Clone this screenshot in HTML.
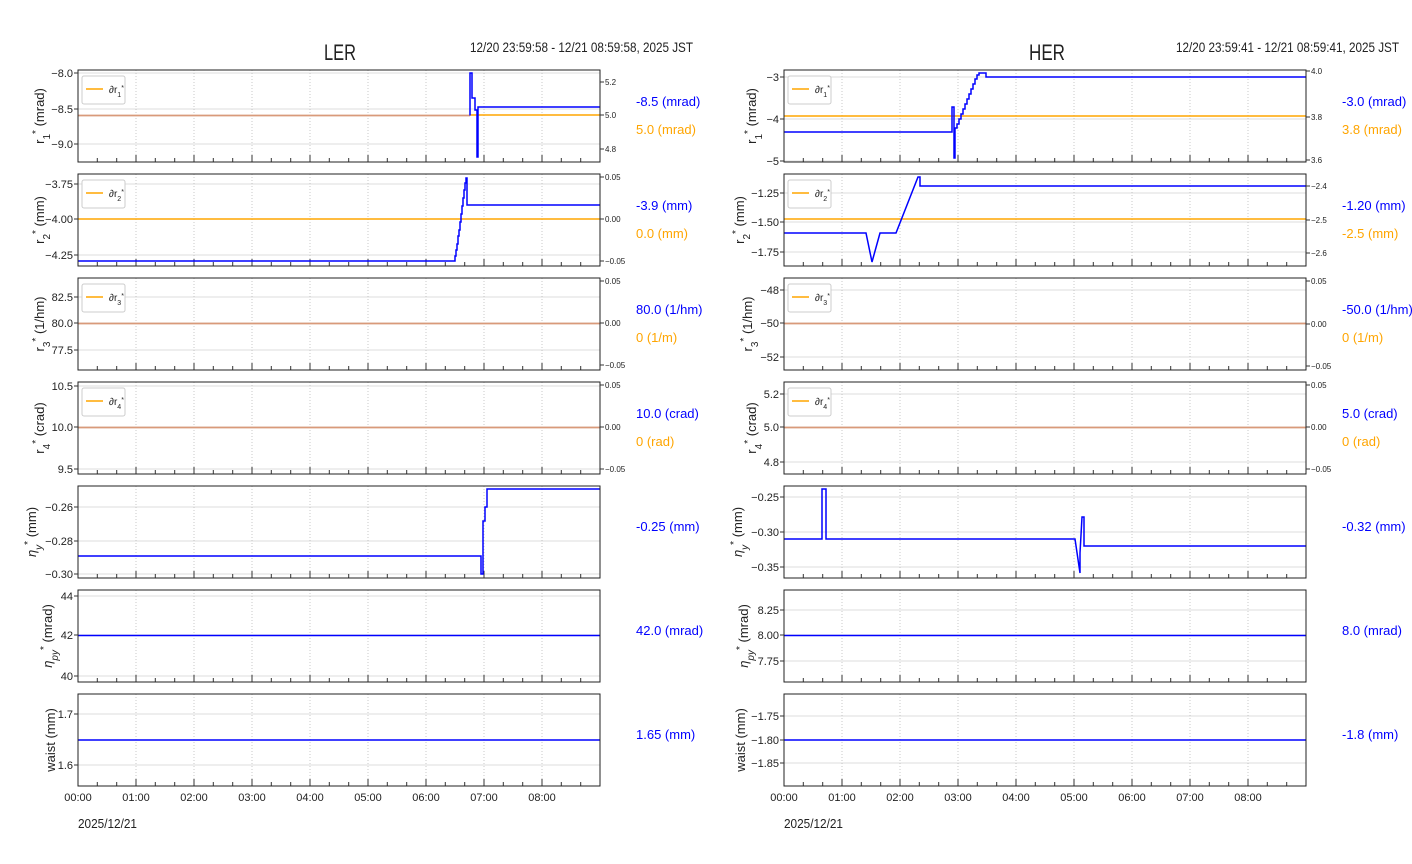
<!DOCTYPE html>
<html><head><meta charset="utf-8"><style>
html,body{margin:0;padding:0;background:#fff;width:1412px;height:864px;overflow:hidden}
svg{display:block}
text{font-family:"Liberation Sans Narrow","Liberation Sans",sans-serif;fill:#222}
.tl{font-size:11px;text-anchor:end}
.tr{font-size:8px}
.yl{font-size:13px;text-anchor:middle}
.vb{font-size:13px;fill:#0000ff}
.vo{font-size:13px;fill:#ffa500}
.xt{font-size:11px;text-anchor:middle}
.bl{fill:none;stroke:#0000ff;stroke-width:1.5}
.or{fill:none;stroke:#ffa500;stroke-width:1.5}
.mx{fill:none;stroke:#d99a7a;stroke-width:1.8}
.hg{stroke:#ddd;stroke-width:1}
</style></head><body>
<svg width="1412" height="864" viewBox="0 0 1412 864" xmlns="http://www.w3.org/2000/svg">
<defs>
<g id="grid">
<path d="M58 0V92M116 0V92M174 0V92M232 0V92M290 0V92M348 0V92M406 0V92M464 0V92" stroke="#bbb" stroke-width="0.8" stroke-dasharray="1,2"/>
<path d="M19.3 92v-4M38.7 92v-4M77.3 92v-4M96.7 92v-4M135.3 92v-4M154.7 92v-4M193.3 92v-4M212.7 92v-4M251.3 92v-4M270.7 92v-4M309.3 92v-4M328.7 92v-4M367.3 92v-4M386.7 92v-4M425.3 92v-4M444.7 92v-4M483.3 92v-4M502.7 92v-4M58 92v-7M116 92v-7M174 92v-7M232 92v-7M290 92v-7M348 92v-7M406 92v-7M464 92v-7" stroke="#333" stroke-width="1"/>
</g>
<rect id="frame" x="0" y="0" width="522" height="92" fill="none" stroke="#222" stroke-width="1"/>
<g id="leg"><rect x="4" y="6" width="43" height="28" rx="2" fill="#fff" stroke="#ccc"/><path d="M8 19H25" stroke="#ffa500" stroke-width="1.5"/></g>
</defs>

<text x="340" y="60" style="font-size:22px;text-anchor:middle" textLength="32" lengthAdjust="spacingAndGlyphs">LER</text>
<text x="470" y="52" style="font-size:14px" textLength="223" lengthAdjust="spacingAndGlyphs">12/20 23:59:58 - 12/21 08:59:58, 2025 JST</text>
<text x="1047" y="60" style="font-size:22px;text-anchor:middle" textLength="36" lengthAdjust="spacingAndGlyphs">HER</text>
<text x="1176" y="52" style="font-size:14px" textLength="223" lengthAdjust="spacingAndGlyphs">12/20 23:59:41 - 12/21 08:59:41, 2025 JST</text>

<!-- ===== LEFT ===== -->
<g transform="translate(78,70)">
<path class="hg" d="M0 3H522M0 39H522M0 74H522"/><use href="#grid"/>
<path class="mx" d="M0 45.5H392"/>
<path class="or" d="M392 45H522"/>
<path class="bl" d="M392 45.5V3H394V28H397V40H399V87H400V37H522"/>
<use href="#leg"/><text x="31" y="23" style="font-size:10px">∂r<tspan baseline-shift="sub" font-size="7">1</tspan><tspan baseline-shift="super" font-size="7">*</tspan></text>
<use href="#frame"/>
<path d="M0 3h-4M0 39h-4M0 74h-4M522 12h4M522 45h4M522 79h4" stroke="#333"/>
<text class="tl" x="-5" y="7">−8.0</text><text class="tl" x="-5" y="43">−8.5</text><text class="tl" x="-5" y="78">−9.0</text>
<text class="tr" x="527" y="15">5.2</text><text class="tr" x="527" y="48">5.0</text><text class="tr" x="527" y="82">4.8</text>
</g>
<text class="yl" transform="translate(44,116) rotate(-90)">r<tspan baseline-shift="sub" font-size="10">1</tspan><tspan baseline-shift="super" font-size="10">*</tspan> (mrad)</text>
<text class="vb" x="636" y="106">-8.5 (mrad)</text><text class="vo" x="636" y="134">5.0 (mrad)</text>

<g transform="translate(78,174)">
<path class="hg" d="M0 10H522M0 45H522M0 81H522"/><use href="#grid"/>
<path class="or" d="M0 45H522"/>
<path class="bl" d="M0 87H377V82H378V76H379V70H380V62H381V56H382V48H383V40H384V32H385V24H386V16H387V9H388V4H389V31H522"/>
<use href="#leg"/><text x="31" y="23" style="font-size:10px">∂r<tspan baseline-shift="sub" font-size="7">2</tspan><tspan baseline-shift="super" font-size="7">*</tspan></text>
<use href="#frame"/>
<path d="M0 10h-4M0 45h-4M0 81h-4M522 3h4M522 45h4M522 87h4" stroke="#333"/>
<text class="tl" x="-5" y="14">−3.75</text><text class="tl" x="-5" y="49">−4.00</text><text class="tl" x="-5" y="85">−4.25</text>
<text class="tr" x="527" y="6">0.05</text><text class="tr" x="527" y="48">0.00</text><text class="tr" x="527" y="90">−0.05</text>
</g>
<text class="yl" transform="translate(44,220) rotate(-90)">r<tspan baseline-shift="sub" font-size="10">2</tspan><tspan baseline-shift="super" font-size="10">*</tspan> (mm)</text>
<text class="vb" x="636" y="210">-3.9 (mm)</text><text class="vo" x="636" y="238">0.0 (mm)</text>

<g transform="translate(78,278)">
<path class="hg" d="M0 19H522M0 45H522M0 72H522"/><use href="#grid"/>
<path class="mx" d="M0 45.5H522"/>
<use href="#leg"/><text x="31" y="23" style="font-size:10px">∂r<tspan baseline-shift="sub" font-size="7">3</tspan><tspan baseline-shift="super" font-size="7">*</tspan></text>
<use href="#frame"/>
<path d="M0 19h-4M0 45h-4M0 72h-4M522 3h4M522 45h4M522 87h4" stroke="#333"/>
<text class="tl" x="-5" y="23">82.5</text><text class="tl" x="-5" y="49">80.0</text><text class="tl" x="-5" y="76">77.5</text>
<text class="tr" x="527" y="6">0.05</text><text class="tr" x="527" y="48">0.00</text><text class="tr" x="527" y="90">−0.05</text>
</g>
<text class="yl" transform="translate(44,324) rotate(-90)">r<tspan baseline-shift="sub" font-size="10">3</tspan><tspan baseline-shift="super" font-size="10">*</tspan> (1/hm)</text>
<text class="vb" x="636" y="314">80.0 (1/hm)</text><text class="vo" x="636" y="342">0 (1/m)</text>

<g transform="translate(78,382)">
<path class="hg" d="M0 4H522M0 45H522M0 87H522"/><use href="#grid"/>
<path class="mx" d="M0 45.5H522"/>
<use href="#leg"/><text x="31" y="23" style="font-size:10px">∂r<tspan baseline-shift="sub" font-size="7">4</tspan><tspan baseline-shift="super" font-size="7">*</tspan></text>
<use href="#frame"/>
<path d="M0 4h-4M0 45h-4M0 87h-4M522 3h4M522 45h4M522 87h4" stroke="#333"/>
<text class="tl" x="-5" y="8">10.5</text><text class="tl" x="-5" y="49">10.0</text><text class="tl" x="-5" y="91">9.5</text>
<text class="tr" x="527" y="6">0.05</text><text class="tr" x="527" y="48">0.00</text><text class="tr" x="527" y="90">−0.05</text>
</g>
<text class="yl" transform="translate(44,428) rotate(-90)">r<tspan baseline-shift="sub" font-size="10">4</tspan><tspan baseline-shift="super" font-size="10">*</tspan> (crad)</text>
<text class="vb" x="636" y="418">10.0 (crad)</text><text class="vo" x="636" y="446">0 (rad)</text>

<g transform="translate(78,486)">
<path class="hg" d="M0 21H522M0 55H522M0 88H522"/><use href="#grid"/>
<path class="bl" d="M0 70H403V88H405V35H407V21H409V3H522"/>
<use href="#frame"/>
<path d="M0 21h-4M0 55h-4M0 88h-4" stroke="#333"/>
<text class="tl" x="-5" y="25">−0.26</text><text class="tl" x="-5" y="59">−0.28</text><text class="tl" x="-5" y="92">−0.30</text>
</g>
<text class="yl" transform="translate(36,532) rotate(-90)"><tspan font-style="italic">η</tspan><tspan baseline-shift="sub" font-size="10" font-style="italic">y</tspan><tspan baseline-shift="super" font-size="10">*</tspan> (mm)</text>
<text class="vb" x="636" y="531">-0.25 (mm)</text>

<g transform="translate(78,590)">
<path class="hg" d="M0 6H522M0 45H522M0 86H522"/><use href="#grid"/>
<path class="bl" d="M0 45.5H522"/>
<use href="#frame"/>
<path d="M0 6h-4M0 45h-4M0 86h-4" stroke="#333"/>
<text class="tl" x="-5" y="10">44</text><text class="tl" x="-5" y="49">42</text><text class="tl" x="-5" y="90">40</text>
</g>
<text class="yl" transform="translate(52,636) rotate(-90)"><tspan font-style="italic">η</tspan><tspan baseline-shift="sub" font-size="10" font-style="italic">py</tspan><tspan baseline-shift="super" font-size="10">*</tspan> (mrad)</text>
<text class="vb" x="636" y="635">42.0 (mrad)</text>

<g transform="translate(78,694)">
<path class="hg" d="M0 20H522M0 71H522"/><use href="#grid"/>
<path class="bl" d="M0 46H522"/>
<use href="#frame"/>
<path d="M0 20h-4M0 71h-4" stroke="#333"/>
<text class="tl" x="-5" y="24">1.7</text><text class="tl" x="-5" y="75">1.6</text>
</g>
<text class="yl" transform="translate(55,740) rotate(-90)">waist (mm)</text>
<text class="vb" x="636" y="739">1.65 (mm)</text>

<g transform="translate(78,801)">
<text class="xt" x="0" y="0">00:00</text><text class="xt" x="58" y="0">01:00</text><text class="xt" x="116" y="0">02:00</text><text class="xt" x="174" y="0">03:00</text><text class="xt" x="232" y="0">04:00</text><text class="xt" x="290" y="0">05:00</text><text class="xt" x="348" y="0">06:00</text><text class="xt" x="406" y="0">07:00</text><text class="xt" x="464" y="0">08:00</text>
<text x="0" y="27" style="font-size:13px" textLength="59" lengthAdjust="spacingAndGlyphs">2025/12/21</text>
</g>

<!-- ===== RIGHT ===== -->
<g transform="translate(784,70)">
<path class="hg" d="M0 7H522M0 49H522M0 91H522"/><use href="#grid"/>
<path class="or" d="M0 46H522"/>
<path class="bl" d="M0 62H168V37H170V88H171V58H173V54H175V49H177V44H179V39H181V34H183V29H185V24H187V19H189V14H191V9H193V5H195V3H202V7H522"/>
<use href="#leg"/><text x="31" y="23" style="font-size:10px">∂r<tspan baseline-shift="sub" font-size="7">1</tspan><tspan baseline-shift="super" font-size="7">*</tspan></text>
<use href="#frame"/>
<path d="M0 7h-4M0 49h-4M0 91h-4M522 1h4M522 47h4M522 90h4" stroke="#333"/>
<text class="tl" x="-5" y="11">−3</text><text class="tl" x="-5" y="53">−4</text><text class="tl" x="-5" y="95">−5</text>
<text class="tr" x="527" y="4">4.0</text><text class="tr" x="527" y="50">3.8</text><text class="tr" x="527" y="93">3.6</text>
</g>
<text class="yl" transform="translate(756,116) rotate(-90)">r<tspan baseline-shift="sub" font-size="10">1</tspan><tspan baseline-shift="super" font-size="10">*</tspan> (mrad)</text>
<text class="vb" x="1342" y="106">-3.0 (mrad)</text><text class="vo" x="1342" y="134">3.8 (mrad)</text>

<g transform="translate(784,174)">
<path class="hg" d="M0 19H522M0 48H522M0 78H522"/><use href="#grid"/>
<path class="or" d="M0 45H522"/>
<path class="bl" d="M0 59H82L88 88L96 59H112L134 3H136V12H522"/>
<use href="#leg"/><text x="31" y="23" style="font-size:10px">∂r<tspan baseline-shift="sub" font-size="7">2</tspan><tspan baseline-shift="super" font-size="7">*</tspan></text>
<use href="#frame"/>
<path d="M0 19h-4M0 48h-4M0 78h-4M522 12h4M522 46h4M522 79h4" stroke="#333"/>
<text class="tl" x="-5" y="23">−1.25</text><text class="tl" x="-5" y="52">−1.50</text><text class="tl" x="-5" y="82">−1.75</text>
<text class="tr" x="527" y="15">−2.4</text><text class="tr" x="527" y="49">−2.5</text><text class="tr" x="527" y="82">−2.6</text>
</g>
<text class="yl" transform="translate(744,220) rotate(-90)">r<tspan baseline-shift="sub" font-size="10">2</tspan><tspan baseline-shift="super" font-size="10">*</tspan> (mm)</text>
<text class="vb" x="1342" y="210">-1.20 (mm)</text><text class="vo" x="1342" y="238">-2.5 (mm)</text>

<g transform="translate(784,278)">
<path class="hg" d="M0 12H522M0 45H522M0 79H522"/><use href="#grid"/>
<path class="mx" d="M0 45.5H522"/>
<use href="#leg"/><text x="31" y="23" style="font-size:10px">∂r<tspan baseline-shift="sub" font-size="7">3</tspan><tspan baseline-shift="super" font-size="7">*</tspan></text>
<use href="#frame"/>
<path d="M0 12h-4M0 45h-4M0 79h-4M522 3h4M522 46h4M522 88h4" stroke="#333"/>
<text class="tl" x="-5" y="16">−48</text><text class="tl" x="-5" y="49">−50</text><text class="tl" x="-5" y="83">−52</text>
<text class="tr" x="527" y="6">0.05</text><text class="tr" x="527" y="49">0.00</text><text class="tr" x="527" y="91">−0.05</text>
</g>
<text class="yl" transform="translate(752,324) rotate(-90)">r<tspan baseline-shift="sub" font-size="10">3</tspan><tspan baseline-shift="super" font-size="10">*</tspan> (1/hm)</text>
<text class="vb" x="1342" y="314">-50.0 (1/hm)</text><text class="vo" x="1342" y="342">0 (1/m)</text>

<g transform="translate(784,382)">
<path class="hg" d="M0 12H522M0 45H522M0 80H522"/><use href="#grid"/>
<path class="mx" d="M0 45.5H522"/>
<use href="#leg"/><text x="31" y="23" style="font-size:10px">∂r<tspan baseline-shift="sub" font-size="7">4</tspan><tspan baseline-shift="super" font-size="7">*</tspan></text>
<use href="#frame"/>
<path d="M0 12h-4M0 45h-4M0 80h-4M522 3h4M522 45h4M522 87h4" stroke="#333"/>
<text class="tl" x="-5" y="16">5.2</text><text class="tl" x="-5" y="49">5.0</text><text class="tl" x="-5" y="84">4.8</text>
<text class="tr" x="527" y="6">0.05</text><text class="tr" x="527" y="48">0.00</text><text class="tr" x="527" y="90">−0.05</text>
</g>
<text class="yl" transform="translate(756,428) rotate(-90)">r<tspan baseline-shift="sub" font-size="10">4</tspan><tspan baseline-shift="super" font-size="10">*</tspan> (crad)</text>
<text class="vb" x="1342" y="418">5.0 (crad)</text><text class="vo" x="1342" y="446">0 (rad)</text>

<g transform="translate(784,486)">
<path class="hg" d="M0 11H522M0 46H522M0 81H522"/><use href="#grid"/>
<path class="bl" d="M0 53H38V3H42V53H291L296 87V67L298 31H300V60H522"/>
<use href="#frame"/>
<path d="M0 11h-4M0 46h-4M0 81h-4" stroke="#333"/>
<text class="tl" x="-5" y="15">−0.25</text><text class="tl" x="-5" y="50">−0.30</text><text class="tl" x="-5" y="85">−0.35</text>
</g>
<text class="yl" transform="translate(742,532) rotate(-90)"><tspan font-style="italic">η</tspan><tspan baseline-shift="sub" font-size="10" font-style="italic">y</tspan><tspan baseline-shift="super" font-size="10">*</tspan> (mm)</text>
<text class="vb" x="1342" y="531">-0.32 (mm)</text>

<g transform="translate(784,590)">
<path class="hg" d="M0 20H522M0 45H522M0 71H522"/><use href="#grid"/>
<path class="bl" d="M0 45.5H522"/>
<use href="#frame"/>
<path d="M0 20h-4M0 45h-4M0 71h-4" stroke="#333"/>
<text class="tl" x="-5" y="24">8.25</text><text class="tl" x="-5" y="49">8.00</text><text class="tl" x="-5" y="75">7.75</text>
</g>
<text class="yl" transform="translate(748,636) rotate(-90)"><tspan font-style="italic">η</tspan><tspan baseline-shift="sub" font-size="10" font-style="italic">py</tspan><tspan baseline-shift="super" font-size="10">*</tspan> (mrad)</text>
<text class="vb" x="1342" y="635">8.0 (mrad)</text>

<g transform="translate(784,694)">
<path class="hg" d="M0 22H522M0 46H522M0 69H522"/><use href="#grid"/>
<path class="bl" d="M0 46H522"/>
<use href="#frame"/>
<path d="M0 22h-4M0 46h-4M0 69h-4" stroke="#333"/>
<text class="tl" x="-5" y="26">−1.75</text><text class="tl" x="-5" y="50">−1.80</text><text class="tl" x="-5" y="73">−1.85</text>
</g>
<text class="yl" transform="translate(745,740) rotate(-90)">waist (mm)</text>
<text class="vb" x="1342" y="739">-1.8 (mm)</text>

<g transform="translate(784,801)">
<text class="xt" x="0" y="0">00:00</text><text class="xt" x="58" y="0">01:00</text><text class="xt" x="116" y="0">02:00</text><text class="xt" x="174" y="0">03:00</text><text class="xt" x="232" y="0">04:00</text><text class="xt" x="290" y="0">05:00</text><text class="xt" x="348" y="0">06:00</text><text class="xt" x="406" y="0">07:00</text><text class="xt" x="464" y="0">08:00</text>
<text x="0" y="27" style="font-size:13px" textLength="59" lengthAdjust="spacingAndGlyphs">2025/12/21</text>
</g>
</svg>
</body></html>
